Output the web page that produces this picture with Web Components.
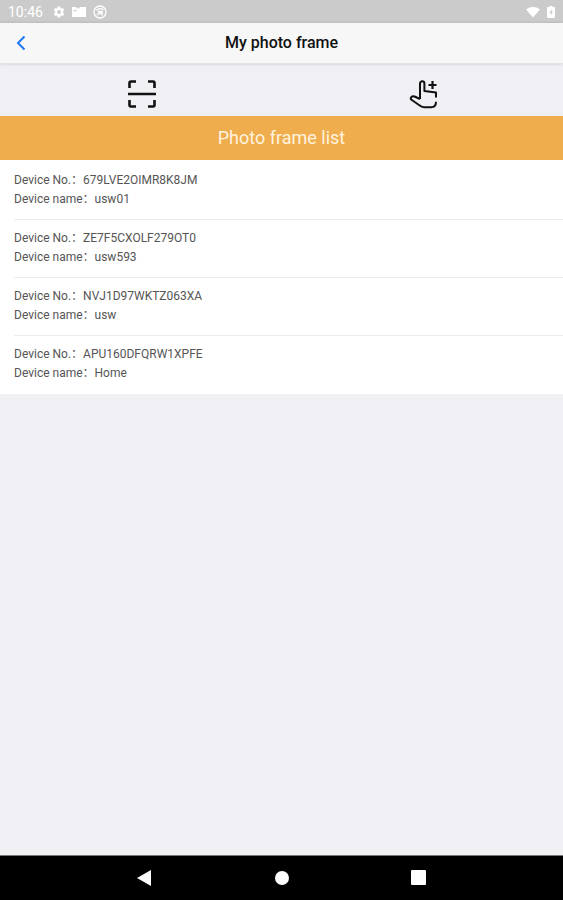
<!DOCTYPE html>
<html lang="en">
<head>
<meta charset="utf-8">
<meta name="viewport" content="width=device-width, initial-scale=1">
<title>My photo frame</title>
<style>
    html, body{
        height: 100%;
        margin: 0;
    }

    body{
        font-family: Roboto, "Noto Sans CJK SC", sans-serif;
        background-color: #efeff4;
    }
</style>
</head>
<body>
<photo-frame-app></photo-frame-app>

<script>
class StatusBar extends HTMLElement{
    constructor(){
        super();
        this.attachShadow({ mode: 'open' });
    }

    connectedCallback(){
        this.render();
    }

    render(){
        this.shadowRoot.innerHTML = `
            <time>10:46</time>
            <svg width="12" height="12" viewBox="0 0 24 24" fill="#fff">
                <path fill-rule="evenodd" d="M9.5 1h5l.6 3.2 1.8 1 3-1.1 2.6 4.4-2.5 2.1v2.8l2.5 2.1-2.6 4.4-3-1.1-1.8 1-.6 3.2h-5l-.6-3.2-1.8-1-3 1.1-2.6-4.4L4 13.4v-2.8L1.5 8.5l2.6-4.4 3 1.1 1.8-1zM12 8a4 4 0 1 0 0 8 4 4 0 0 0 0-8z"/>
            </svg>
            <svg width="14" height="12" viewBox="0 0 14 12" fill="#fff">
                <path fill-rule="evenodd" d="M0 1h4.5v2L6 1.5 7 3l1-2h6v10H0zM1.5 4v1.200h3V4z"/>
            </svg>
            <svg width="14" height="14" viewBox="0 0 14 14" fill="none" stroke="#fff" stroke-width="1.3">
                <circle cx="7" cy="7" r="6"/>
                <path d="M3.5 5.5C5 3.5 8.5 3 10.5 4.8M4 10l2.600-2.600M5 6.500h4v4M9 6.500 6.500 9"/>
            </svg>
            <span class="space"></span>
            <svg width="14" height="12" viewBox="0 0 14 12" fill="#fff">
                <path d="M0 3.5C4 .2 10 .2 14 3.5L7 11.5z"/>
            </svg>
            <svg width="8" height="12" viewBox="0 0 8 12">
                <path fill="#fff" d="M2.500 0h3v1H7a1 1 0 0 1 1 1v9a1 1 0 0 1-1 1H1a1 1 0 0 1-1-1V2a1 1 0 0 1 1-1h1.500z"/>
                <path fill="#cbcbcb" d="M4.500 3 2.500 7h1.300v2.500l2-4H4.500z"/>
            </svg>
            <style>
                :host{
                    display: flex;
                    align-items: center;
                    gap: 7px;
                    height: 23px;
                    padding: 0 8px;
                    background-color: #cbcbcb;
                    color: #fff;
                    font-size: 14px;
                    font-weight: 400;
                }

                time{
                    margin-right: 3px;
                }

                .space{
                    flex: 1;
                }
            </style>
        `;
    }
}

class TitleBar extends HTMLElement{
    constructor(){
        super();
        this.attachShadow({ mode: 'open' });
    }

    connectedCallback(){
        this.render();
    }

    render(){
        this.shadowRoot.innerHTML = `
            <button type="button" aria-label="Back">
                <svg width="10" height="16" viewBox="0 0 10 16" fill="none" stroke="#1f76f0" stroke-width="2">
                    <path d="M8.5 1.5 2 8l6.500 6.500"/>
                </svg>
            </button>
            <h1><slot></slot></h1>
            <style>
                :host{
                    display: grid;
                    grid-template-columns: 42px 1fr 42px;
                    align-items: center;
                    height: 40px;
                    background-color: #f7f7f7;
                    border-bottom: 1px solid #e2e2e5;
                    box-shadow: 0 0 3px rgba(0, 0, 0, 0.15);
                }

                button{
                    display: flex;
                    align-items: center;
                    justify-content: center;
                    height: 40px;
                    padding: 0;
                    border: 0;
                    background: none;
                }

                h1{
                    margin: 0;
                    font-size: 16px;
                    font-weight: 500;
                    line-height: 20px;
                    text-align: center;
                    color: #111;
                }
            </style>
        `;
    }
}

class AddActions extends HTMLElement{
    constructor(){
        super();
        this.attachShadow({ mode: 'open' });
    }

    connectedCallback(){
        this.render();
    }

    render(){
        this.shadowRoot.innerHTML = `
            <button type="button" aria-label="Scan code">
                <svg width="30" height="30" viewBox="0 0 30 30" fill="none" stroke="#111" stroke-width="2.6">
                    <path d="M2.5 9V4A1.5 1.5 0 0 1 4 2.5h5M21 2.5h5A1.5 1.5 0 0 1 27.5 4v5M27.5 21v5a1.5 1.5 0 0 1-1.5 1.5h-5M9 27.500H4A1.500 1.500 0 0 1 2.500 26v-5M1 15h28"/>
                </svg>
            </button>
            <button type="button" aria-label="Add manually">
                <svg width="32" height="30" viewBox="0 0 32 30" fill="none" stroke="#111" stroke-width="2" stroke-linejoin="round">
                    <path d="M13 20V4.500a2.200 2.200 0 0 1 4.400 0v7.500l11.600 1.500v5M13 20l-5.500-2.500c-2.500-1-5 1.500-3 3.300l7.500 5.200c1.500 1.200 3 2.200 5 2.200h7c3 0 5-2.200 5-5.500"/>
                    <path d="M25.500 2v8M21.500 6h8" stroke-width="2.2"/>
                </svg>
            </button>
            <style>
                :host{
                    display: flex;
                    height: 52px;
                }

                button{
                    flex: 1;
                    display: flex;
                    align-items: center;
                    justify-content: center;
                    padding: 7px 0 0 2px;
                    border: 0;
                    background: none;
                }
            </style>
        `;
    }
}

class DeviceItem extends HTMLElement{
    constructor(){
        super();
        this.attachShadow({ mode: 'open' });
    }

    connectedCallback(){
        this.render();
    }

    get number(){
        return this.getAttribute("number");
    }

    get name(){
        return this.getAttribute("name");
    }

    render(){
        this.shadowRoot.innerHTML = `
            <div>Device No.：${this.number}</div>
            <div>Device name：${this.name}</div>
            <style>
                :host{
                    display: block;
                    box-sizing: border-box;
                    height: 58px;
                    margin-left: 14px;
                    padding-top: 9px;
                    border-bottom: 1px solid #ececee;
                    color: #555;
                    font-size: 12px;
                    line-height: 19px;
                }

                :host(:last-child){
                    border-bottom: 0;
                }
            </style>
        `;
    }
}

class DeviceList extends HTMLElement{
    constructor(){
        super();
        this.attachShadow({ mode: 'open' });
    }

    connectedCallback(){
        this.render();
    }

    render(){
        this.shadowRoot.innerHTML = `
            <h2>Photo frame list</h2>
            <div id="items"><slot></slot></div>
            <style>
                :host{
                    display: block;
                }

                h2{
                    margin: 0;
                    background-color: #f0ad4e;
                    color: #fff3df;
                    font-size: 18px;
                    font-weight: 400;
                    line-height: 44px;
                    text-align: center;
                }

                #items{
                    padding-top: 2px;
                    background-color: #fff;
                }
            </style>
        `;
    }
}

class SystemNav extends HTMLElement{
    constructor(){
        super();
        this.attachShadow({ mode: 'open' });
    }

    connectedCallback(){
        this.render();
    }

    render(){
        this.shadowRoot.innerHTML = `
            <button type="button" aria-label="Back">
                <svg width="16" height="16" viewBox="0 0 16 16" fill="#fff"><path d="M14 0v16L0 8z"/></svg>
            </button>
            <button type="button" aria-label="Home">
                <svg width="16" height="16" viewBox="0 0 16 16" fill="#fff"><circle cx="8" cy="8" r="7"/></svg>
            </button>
            <button type="button" aria-label="Recent apps">
                <svg width="16" height="16" viewBox="0 0 16 16" fill="#fff"><rect width="15" height="15" rx="1"/></svg>
            </button>
            <style>
                :host{
                    display: flex;
                    justify-content: center;
                    height: 44px;
                    background-color: #000;
                    border-top: 1px solid #777;
                }

                button{
                    flex: 0 0 137px;
                    display: flex;
                    align-items: center;
                    justify-content: center;
                    padding: 0;
                    border: 0;
                    background: none;
                }
            </style>
        `;
    }
}

class PhotoFrameApp extends HTMLElement{
    constructor(){
        super();
        this.attachShadow({ mode: 'open' });
    }

    connectedCallback(){
        this.render();
    }

    render(){
        this.shadowRoot.innerHTML = `
            <status-bar></status-bar>
            <title-bar>My photo frame</title-bar>
            <main>
                <add-actions></add-actions>
                <device-list>
                    <device-item number="679LVE2OIMR8K8JM" name="usw01"></device-item>
                    <device-item number="ZE7F5CXOLF279OT0" name="usw593"></device-item>
                    <device-item number="NVJ1D97WKTZ063XA" name="usw"></device-item>
                    <device-item number="APU160DFQRW1XPFE" name="Home"></device-item>
                </device-list>
            </main>
            <system-nav></system-nav>
            <style>
                :host{
                    display: flex;
                    flex-direction: column;
                    min-height: 100vh;
                }

                main{
                    flex: 1;
                }
            </style>
        `;
    }
}

customElements.define('status-bar', StatusBar);
customElements.define('title-bar', TitleBar);
customElements.define('add-actions', AddActions);
customElements.define('device-item', DeviceItem);
customElements.define('device-list', DeviceList);
customElements.define('system-nav', SystemNav);
customElements.define('photo-frame-app', PhotoFrameApp);
</script>
</body>
</html>
